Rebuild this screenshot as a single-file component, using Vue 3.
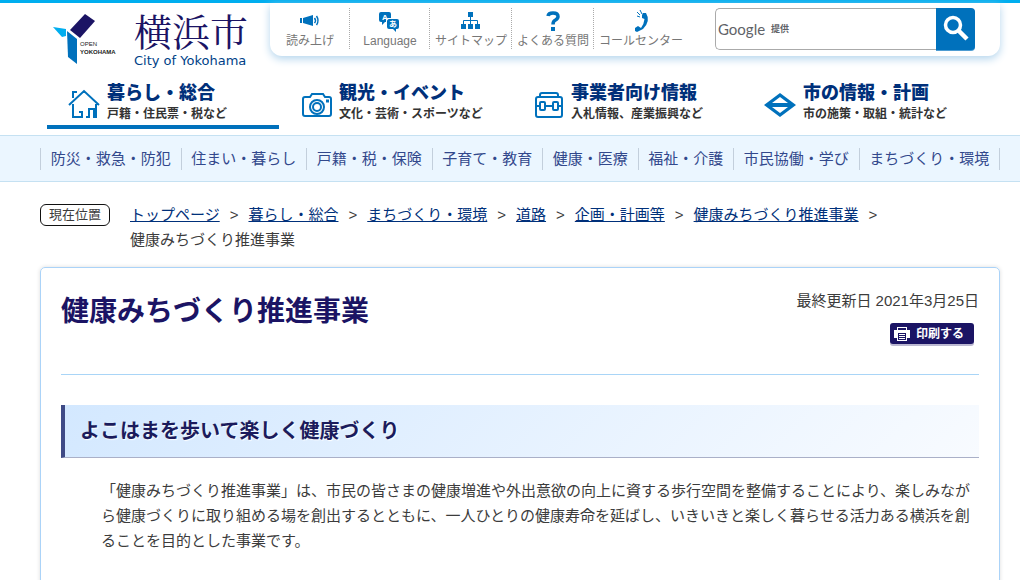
<script setup>
import { ref } from 'vue'

const query = ref('')

const tools = [
  { label: '読み上げ', icon: 'speaker' },
  { label: 'Language', icon: 'language' },
  { label: 'サイトマップ', icon: 'sitemap' },
  { label: 'よくある質問', icon: 'question' },
  { label: 'コールセンター', icon: 'phone' },
]

const sections = [
  { title: '暮らし・総合', sub: '戸籍・住民票・税など', icon: 'house', active: true },
  { title: '観光・イベント', sub: '文化・芸術・スポーツなど', icon: 'camera' },
  { title: '事業者向け情報', sub: '入札情報、産業振興など', icon: 'case' },
  { title: '市の情報・計画', sub: '市の施策・取組・統計など', icon: 'emblem' },
]

const topics = [
  '防災・救急・防犯', '住まい・暮らし', '戸籍・税・保険', '子育て・教育',
  '健康・医療', '福祉・介護', '市民協働・学び', 'まちづくり・環境',
]

const crumbs = ['トップページ', '暮らし・総合', 'まちづくり・環境', '道路', '企画・計画等', '健康みちづくり推進事業']
</script>

<template>
  <div class="page">
    <header class="header">
      <a class="logo" href="#" aria-label="横浜市">
        <svg class="mark" width="66" height="54" viewBox="0 0 66 54" aria-hidden="true">
          <path d="M32 1 42 8 27 25 17 17Z" fill="#1b1464" />
          <path d="M0 14 13 16 13 23 9 24Z" fill="#00aeef" />
          <path d="M14 18 24 26V51L15 44Z" fill="#0071bc" />
          <text x="27" y="33" class="open">OPEN</text>
          <text x="27" y="41" class="yokohama">YOKOHAMA</text>
        </svg>
        <span class="name">
          <span class="name-ja">横浜市</span>
          <span class="name-en">City of Yokohama</span>
        </span>
      </a>

      <div class="panel">
        <ul class="tools">
          <li v-for="t in tools" :key="t.label">
            <a href="#">
              <svg v-if="t.icon === 'speaker'" width="22" height="22" viewBox="0 0 22 22" fill="#0071bc">
                <path d="M1 11h2v5H1zM4 11 14 8v11L4 16Z" />
                <path d="M15.500 11q2 2.500 0 5M17.500 9q3 4.500 0 9" fill="none" stroke="#0071bc" stroke-width="1.500" />
              </svg>
              <svg v-else-if="t.icon === 'language'" width="22" height="22" viewBox="0 0 22 22" fill="#0071bc">
                <path d="M2 5h8q2 0 2 2v4H9q-2 0-2 2v2H6l-3 3v-3H2q-2 0-2-2V7q0-2 2-2Z" />
                <path d="M10 12h8q2 0 2 2v6q0 2-2 2h-1v3l-3-3h-4q-2 0-2-2v-6q0-2 2-2Z" />
                <text x="3" y="13" class="glyph">A</text>
                <text x="10" y="20" class="glyph">あ</text>
              </svg>
              <svg v-else-if="t.icon === 'sitemap'" width="22" height="22" viewBox="0 0 22 22" fill="#0071bc">
                <path d="M8 5h5v5H8zM1 17h5v5H1zM8 17h5v5H8zM15 17h5v5h-5z" />
                <path d="M10.500 9v9M3.500 17v-3.500h14V17" fill="none" stroke="#0071bc" />
              </svg>
              <svg v-else-if="t.icon === 'question'" width="22" height="22" viewBox="0 0 22 22">
                <path d="M6 9Q6.500 6 11 6q5 0 5 3.500 0 2-2.500 3.500-2.500 1.200-2.500 4.500" fill="none" stroke="#0071bc" stroke-width="3.500" />
                <path d="M9 20h4v4H9z" fill="#0071bc" />
              </svg>
              <svg v-else width="22" height="22" viewBox="0 0 22 22">
                <path d="M13 6 16 6Q21 14 13 22L7 25 5 24 5 21 8 19 11 21Q14 17 14.500 12L12 11 12 8Z" fill="#0071bc" />
                <path d="M12 7 10 3M10 8 7 5M10 10 7 9" stroke="#0071bc" />
              </svg>
              <span>{{ t.label }}</span>
            </a>
          </li>
        </ul>
        <form class="search" role="search" @submit.prevent>
          <label class="brand" for="q" v-show="!query"><span>Google</span><small>提供</small></label>
          <input id="q" v-model="query" type="text" />
          <button type="submit" aria-label="検索">
            <svg width="28" height="28" viewBox="0 0 28 28" fill="none" stroke="#fff">
              <circle cx="11" cy="10" r="7.500" stroke-width="3.500" />
              <path d="M16 15 25 24" stroke-width="4.500" />
            </svg>
          </button>
        </form>
      </div>
    </header>

    <nav class="sections">
      <a v-for="s in sections" :key="s.title" href="#" :class="{ active: s.active }">
        <svg width="34" height="34" viewBox="0 0 34 34" fill="none" stroke="#0071bc" stroke-width="2">
          <template v-if="s.icon === 'house'">
            <path d="M2 18 17 4l15 14M6 11V5h4M6 17v13h9v-5h-3M19 30h3v-8h5v8h2V17" />
            <path d="M15 30h-2" />
          </template>
          <template v-else-if="s.icon === 'camera'">
            <path d="M6 10h5l2-3h11l2 3h4q2 0 2 2v15q0 2-2 2H6q-2 0-2-2V12q0-2 2-2Z" />
            <circle cx="18" cy="20" r="7" /><circle cx="18" cy="20" r="4" />
            <path d="M27 14h3" stroke-width="3" />
          </template>
          <template v-else-if="s.icon === 'case'">
            <path d="M9 10V8q0-2 2-2h14q2 0 2 2v2M7 10h22q2 0 2 2v16q0 2-2 2H7q-2 0-2-2V12q0-2 2-2ZM5 19h4M14 19h8M27 19h4" />
            <rect x="9" y="15" width="5" height="8" rx="1" /><rect x="22" y="15" width="5" height="8" rx="1" />
          </template>
          <template v-else>
            <path d="M1 18 17 6l16 12-16 12Z M9 16h16l-8-6Z M9 20h16l-8 6Z" fill="#0071bc" fill-rule="evenodd" stroke="none" />
          </template>
        </svg>
        <span class="txt"><strong>{{ s.title }}</strong><span>{{ s.sub }}</span></span>
      </a>
    </nav>

    <nav class="topics">
      <ul>
        <li v-for="t in topics" :key="t"><a href="#">{{ t }}</a></li>
      </ul>
    </nav>

    <div class="where">
      <span class="tag">現在位置</span>
      <ol>
        <li v-for="c in crumbs" :key="c"><a href="#">{{ c }}</a><i>&gt;</i></li>
        <li>健康みちづくり推進事業</li>
      </ol>
    </div>

    <main class="card">
      <div class="head">
        <h1>健康みちづくり推進事業</h1>
        <div class="meta">
          <p>最終更新日 2021年3月25日</p>
          <button type="button">
            <svg width="16" height="14" viewBox="0 0 16 14" aria-hidden="true">
              <path d="M3 0h10v3h3v8h-3v3H3v-3H0V3h3z" fill="#fff" />
              <path d="M4 1h8v2H4zM4 6h8v7H4z" fill="#1b1464" />
              <path d="M5 7h6v1H5zM5 9h6v1H5zM5 11h6v1H5z" fill="#fff" />
            </svg>
            印刷する
          </button>
        </div>
      </div>
      <h2>よこはまを歩いて楽しく健康づくり</h2>
      <p class="body">「健康みちづくり推進事業」は、市民の皆さまの健康増進や外出意欲の向上に資する歩行空間を整備することにより、楽しみながら健康づくりに取り組める場を創出するとともに、一人ひとりの健康寿命を延ばし、いきいきと楽しく暮らせる活力ある横浜を創ることを目的とした事業です。</p>
    </main>
  </div>
</template>

<style>
body {
  margin: 0;
  overflow: hidden;
}
</style>

<style scoped>
.page {
  border-top: 3px solid #00aeef;
  font-family: "Liberation Sans", "Noto Sans CJK JP", sans-serif;
  font-size: 15px;
  line-height: 25px;
  color: #3c3c3c;
  background: #fff;
}
ul, ol {
  list-style: none;
  margin: 0;
  padding: 0;
}
a {
  color: #00307a;
  text-decoration: none;
}
h1, h2, p {
  margin: 0;
}
.header {
  display: flex;
  justify-content: space-between;
  align-items: flex-start;
  padding: 0 20px 0 53px;
}
.logo {
  display: flex;
  gap: 15px;
  padding-top: 10px;
}
.open, .yokohama {
  font: 6px "Liberation Sans", sans-serif;
  fill: #222;
}
.yokohama {
  font-weight: bold;
}
.name {
  display: flex;
  flex-direction: column;
  color: #1b1464;
}
.name-ja {
  font: 38px/40px "Liberation Serif", "Noto Serif CJK JP", "Noto Sans CJK JP", serif;
}
.name-en {
  font: 13px/16px "DejaVu Sans", sans-serif;
  color: #003f87;
}
.panel {
  display: flex;
  justify-content: space-between;
  width: 730px;
  height: 53px;
  border-radius: 0 0 12px 12px;
  background: #fff;
  box-shadow: 0 3px 8px #b4d5ed;
  box-sizing: border-box;
  padding: 5px 25px 0 0;
}
.tools {
  display: flex;
  height: 41px;
}
.tools li {
  box-sizing: border-box;
  min-width: 80px;
  padding: 0 4px 0 5px;
  border-right: 1px dotted #aaa;
}
.tools li:last-child {
  border: 0;
}
.tools a {
  display: flex;
  flex-direction: column;
  align-items: center;
  font-size: 12px;
  line-height: 20px;
  color: #777;
}
.tools svg {
  margin-top: -1px;
  margin-bottom: 2px;
  overflow: visible;
}
.glyph {
  font: bold 8px "Liberation Sans", "Noto Sans CJK JP", sans-serif;
  fill: #fff;
}
.search {
  position: relative;
  display: flex;
  width: 260px;
  height: 42px;
}
.search input {
  flex: 1;
  min-width: 0;
  box-sizing: border-box;
  border: 1px solid #aaa;
  border-right: 0;
  border-radius: 5px 0 0 5px;
  font-size: 15px;
  padding: 0 8px;
  background: #fff;
}
.brand {
  position: absolute;
  left: 3px;
  top: 9px;
  display: flex;
  align-items: center;
  gap: 6px;
  font: 15px/24px Lato, sans-serif;
  color: #5f6368;
}
.brand small {
  font: bold 9px/24px "Noto Sans CJK JP", sans-serif;
}
.search button {
  display: flex;
  align-items: center;
  justify-content: center;
  width: 39px;
  padding: 0;
  border: 0;
  border-radius: 0 4px 4px 0;
  background: #0071bc;
  box-shadow: 0 1px 0 #4d9cd2;
}
.sections {
  display: grid;
  grid-template-columns: repeat(4, 1fr);
  padding: 2px 45px 6px 47px;
}
.sections a {
  display: flex;
  gap: 6px;
  height: 44px;
  padding: 10px 0 0 20px;
  border-bottom: 4px solid transparent;
}
.sections a.active {
  border-color: #0071bc;
}
.sections svg {
  margin-top: 6px;
}
.txt {
  display: flex;
  flex-direction: column;
  font-size: 12px;
  line-height: 18px;
  font-weight: bold;
  color: #333;
}
.txt strong {
  font-size: 18px;
  line-height: 24px;
  color: #00307a;
}
.topics {
  background: #ebf6ff;
  border: solid #c5e1f2;
  border-width: 1px 0;
  padding: 12px 20px 11px 40px;
}
.topics ul {
  display: flex;
  border-left: 1px solid #c3cfdc;
}
.topics li {
  flex: 1 1 auto;
  text-align: center;
  line-height: 22px;
  border-right: 1px solid #c3cfdc;
}
.topics a {
  color: #32488c;
}
.where {
  display: flex;
  align-items: flex-start;
  gap: 20px;
  padding: 20px 40px 15px 40px;
}
.tag {
  flex: none;
  box-sizing: border-box;
  width: 70px;
  height: 22px;
  margin-top: 2px;
  border: 1px solid #111;
  border-radius: 6px;
  text-align: center;
  font-size: 13px;
  line-height: 20px;
}
.where ol {
  display: flex;
  flex-wrap: wrap;
}
.where a {
  text-decoration: underline;
}
.where i {
  font-style: normal;
  margin: 0 10px;
}
.card {
  margin: 0 20px 0 40px;
  padding: 20px 20px 40px;
  border: 1px solid #abd3f8;
  border-radius: 5px;
  box-shadow: 0 0 4px #ddd;
}
.head {
  display: flex;
  justify-content: space-between;
  align-items: flex-start;
  height: 86px;
  border-bottom: 1px solid #a9d5f7;
}
h1 {
  font-size: 28px;
  line-height: 48px;
  color: #1b1464;
}
.meta {
  display: flex;
  flex-direction: column;
  align-items: flex-end;
  gap: 10px;
}
.meta button {
  display: flex;
  align-items: center;
  gap: 6px;
  height: 21px;
  margin-right: 5px;
  padding: 0 10px 0 4px;
  border: 0;
  border-radius: 3px;
  background: #1b1464;
  box-shadow: 0 2px 0 #bbb8d1;
  color: #fff;
  font: bold 12px/20px "Liberation Sans", "Noto Sans CJK JP", sans-serif;
}
h2 {
  margin-top: 30px;
  padding: 0 15px;
  border-left: 4px solid #3f4a86;
  border-bottom: 1px solid #aab0c8;
  background: linear-gradient(135deg, #d3e8ff, #f8fbff);
  color: #1b1b5c;
  font-size: 20px;
  line-height: 52px;
  text-shadow: 1px 1px 1px #fff;
}
.body {
  margin: 20px 0 0 40px;
}
</style>
